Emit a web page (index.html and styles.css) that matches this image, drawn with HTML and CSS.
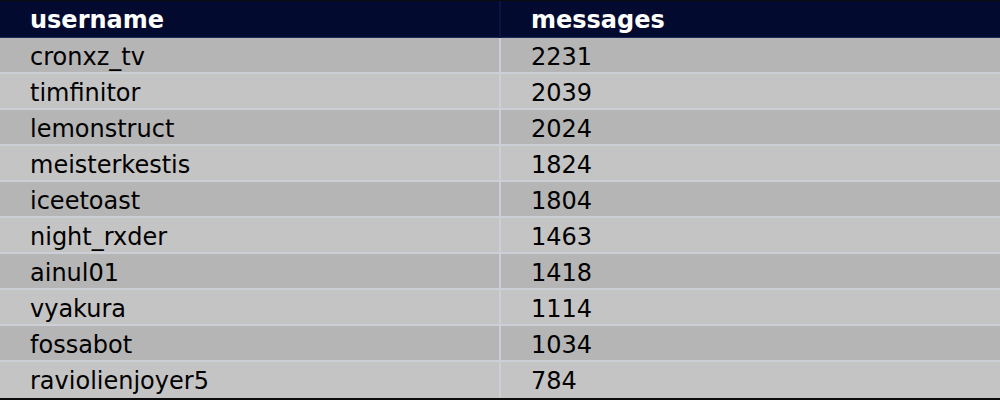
FILE: index.html
```html
<!DOCTYPE html>
<html>
<head>
<meta charset="utf-8">
<link rel="stylesheet" href="styles.css">
</head>
<body>
<table class="board">
  <thead>
    <tr><th>username</th><th>messages</th></tr>
  </thead>
  <tbody>
    <tr><td>cronxz_tv</td><td>2231</td></tr>
    <tr><td>timfinitor</td><td>2039</td></tr>
    <tr><td>lemonstruct</td><td>2024</td></tr>
    <tr><td>meisterkestis</td><td>1824</td></tr>
    <tr><td>iceetoast</td><td>1804</td></tr>
    <tr><td>night_rxder</td><td>1463</td></tr>
    <tr><td>ainul01</td><td>1418</td></tr>
    <tr><td>vyakura</td><td>1114</td></tr>
    <tr><td>fossabot</td><td>1034</td></tr>
    <tr><td>raviolienjoyer5</td><td>784</td></tr>
  </tbody>
</table>
</body>
</html>
```
FILE: styles.css
```css
html, body {
  margin: 0;
  padding: 0;
  background: #0b0b0b;
}
.board {
  width: 100%;
  border-collapse: collapse;
  table-layout: fixed;
  font-family: "DejaVu Sans", Verdana, sans-serif;
  font-size: 24px;
  margin-top: 1px;
}
.board th, .board td {
  text-align: left;
  padding: 0 0 0 30px;
  vertical-align: top;
}
.board th {
  background: #030a30;
  color: #ffffff;
  font-weight: bold;
  padding-top: 2px;
  line-height: 34px;
  border-bottom: 1px solid #1a2a5a;
}
.board th:first-child {
  border-right: 2px solid #0a1440;
}
.board td {
  padding-top: 4px;
  line-height: 30px;
  color: #000;
  border-bottom: 2px solid #ccd0d6;
}
.board td:first-child {
  border-right: 2px solid #ccd0d6;
}
.board tbody tr:nth-child(odd) td {
  background: #b5b5b5;
}
.board tbody tr:nth-child(even) td {
  background: #c4c4c4;
}
.board tbody tr:last-child td {
  border-bottom: none;
  padding-bottom: 2px;
}
```
